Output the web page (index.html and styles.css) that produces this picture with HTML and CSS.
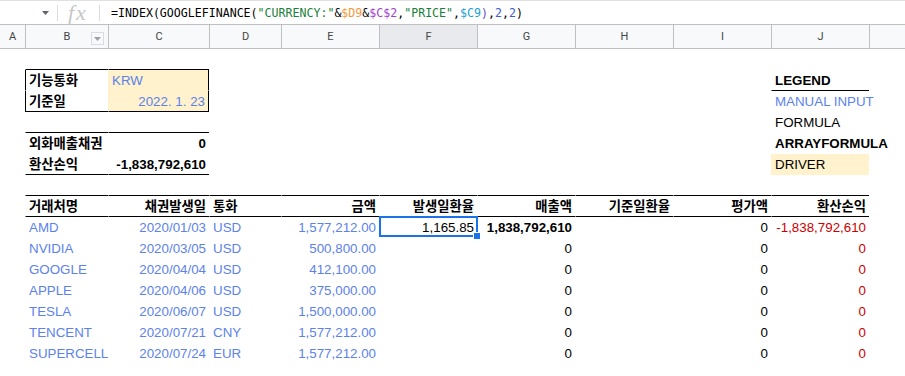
FILE: index.html
```html
<!DOCTYPE html>
<html lang="ko">
<head>
  <meta charset="UTF-8" />
  <title>외화환산</title>
  <link rel="stylesheet" href="styles.css">
</head>
<body>

  <div class="formula-bar">
    <div class="name-box">
      <svg class="caret" width="7" height="4" viewBox="0 0 7 4"><path d="M0 0h7L3.5 4z" fill="#5f6368"/></svg>
    </div>
    <div class="sep"></div>
    <div class="fx">fx</div>
    <div class="sep"></div>
    <div class="formula">=INDEX(GOOGLEFINANCE(<span class="f-str">"CURRENCY:"</span>&amp;<span class="f-d">$D9</span>&amp;<span class="f-c">$C$2</span>,<span class="f-str">"PRICE"</span>,<span class="f-c9">$C9</span><span class="f-p">)</span>,<span class="f-num">2</span>,<span class="f-num">2</span>)</div>
  </div>

  <div class="colhead">
    <div class="ch">A</div>
    <div class="ch ch-filter">B
      <span class="filter"><svg width="7" height="4" viewBox="0 0 7 4"><path d="M0 0h7L3.5 4z" fill="#9aa0a6"/></svg></span>
    </div>
    <div class="ch">C</div>
    <div class="ch">D</div>
    <div class="ch">E</div>
    <div class="ch active">F</div>
    <div class="ch">G</div>
    <div class="ch">H</div>
    <div class="ch">I</div>
    <div class="ch">J</div>
    <div class="ch"></div>
  </div>

  <div class="sheet">
    <!-- 1 -->
    <div class="row">
      <div class="cell"></div><div class="cell bb"></div><div class="cell bb"></div>
      <div class="cell"></div><div class="cell"></div><div class="cell"></div><div class="cell"></div>
      <div class="cell"></div><div class="cell"></div><div class="cell"></div><div class="cell"></div>
    </div>
    <!-- 2 -->
    <div class="row">
      <div class="cell"></div>
      <div class="cell bl b">기능통화</div>
      <div class="cell br drv in">KRW</div>
      <div class="cell"></div><div class="cell"></div><div class="cell"></div><div class="cell"></div>
      <div class="cell"></div><div class="cell"></div>
      <div class="cell bb b">LEGEND</div>
      <div class="cell"></div>
    </div>
    <!-- 3 -->
    <div class="row">
      <div class="cell"></div>
      <div class="cell bl bb b">기준일</div>
      <div class="cell br bb drv in r">2022. 1. 23</div>
      <div class="cell"></div><div class="cell"></div><div class="cell"></div><div class="cell"></div>
      <div class="cell"></div><div class="cell"></div>
      <div class="cell in">MANUAL INPUT</div>
      <div class="cell"></div>
    </div>
    <!-- 4 -->
    <div class="row">
      <div class="cell"></div><div class="cell bb"></div><div class="cell bb"></div>
      <div class="cell"></div><div class="cell"></div><div class="cell"></div><div class="cell"></div>
      <div class="cell"></div><div class="cell"></div>
      <div class="cell">FORMULA</div>
      <div class="cell"></div>
    </div>
    <!-- 5 -->
    <div class="row">
      <div class="cell"></div>
      <div class="cell b">외화매출채권</div>
      <div class="cell b r">0</div>
      <div class="cell"></div><div class="cell"></div><div class="cell"></div><div class="cell"></div>
      <div class="cell"></div><div class="cell"></div>
      <div class="cell b">ARRAYFORMULA</div>
      <div class="cell"></div>
    </div>
    <!-- 6 -->
    <div class="row">
      <div class="cell"></div>
      <div class="cell bb b">환산손익</div>
      <div class="cell bb b r">-1,838,792,610</div>
      <div class="cell"></div><div class="cell"></div><div class="cell"></div><div class="cell"></div>
      <div class="cell"></div><div class="cell"></div>
      <div class="cell drv">DRIVER</div>
      <div class="cell"></div>
    </div>
    <!-- 7 -->
    <div class="row">
      <div class="cell"></div>
      <div class="cell bb"></div><div class="cell bb"></div><div class="cell bb"></div><div class="cell bb"></div>
      <div class="cell bb"></div><div class="cell bb"></div><div class="cell bb"></div><div class="cell bb"></div>
      <div class="cell bb"></div>
      <div class="cell"></div>
    </div>
    <!-- 8 -->
    <div class="row">
      <div class="cell"></div>
      <div class="cell bb b">거래처명</div>
      <div class="cell bb b r">채권발생일</div>
      <div class="cell bb b">통화</div>
      <div class="cell bb b r">금액</div>
      <div class="cell bb b r">발생일환율</div>
      <div class="cell bb b r">매출액</div>
      <div class="cell bb b r">기준일환율</div>
      <div class="cell bb b r">평가액</div>
      <div class="cell bb b r">환산손익</div>
      <div class="cell"></div>
    </div>
    <!-- 9 -->
    <div class="row">
      <div class="cell"></div>
      <div class="cell in">AMD</div>
      <div class="cell in r">2020/01/03</div>
      <div class="cell in">USD</div>
      <div class="cell in r">1,577,212.00</div>
      <div class="cell r selected">1,165.85<span class="sel"><span class="handle"></span></span></div>
      <div class="cell b r">1,838,792,610</div>
      <div class="cell"></div>
      <div class="cell r">0</div>
      <div class="cell neg r">-1,838,792,610</div>
      <div class="cell"></div>
    </div>
    <!-- 10 -->
    <div class="row">
      <div class="cell"></div>
      <div class="cell in">NVIDIA</div>
      <div class="cell in r">2020/03/05</div>
      <div class="cell in">USD</div>
      <div class="cell in r">500,800.00</div>
      <div class="cell"></div>
      <div class="cell r">0</div>
      <div class="cell"></div>
      <div class="cell r">0</div>
      <div class="cell neg r">0</div>
      <div class="cell"></div>
    </div>
    <!-- 11 -->
    <div class="row">
      <div class="cell"></div>
      <div class="cell in">GOOGLE</div>
      <div class="cell in r">2020/04/04</div>
      <div class="cell in">USD</div>
      <div class="cell in r">412,100.00</div>
      <div class="cell"></div>
      <div class="cell r">0</div>
      <div class="cell"></div>
      <div class="cell r">0</div>
      <div class="cell neg r">0</div>
      <div class="cell"></div>
    </div>
    <!-- 12 -->
    <div class="row">
      <div class="cell"></div>
      <div class="cell in">APPLE</div>
      <div class="cell in r">2020/04/06</div>
      <div class="cell in">USD</div>
      <div class="cell in r">375,000.00</div>
      <div class="cell"></div>
      <div class="cell r">0</div>
      <div class="cell"></div>
      <div class="cell r">0</div>
      <div class="cell neg r">0</div>
      <div class="cell"></div>
    </div>
    <!-- 13 -->
    <div class="row">
      <div class="cell"></div>
      <div class="cell in">TESLA</div>
      <div class="cell in r">2020/06/07</div>
      <div class="cell in">USD</div>
      <div class="cell in r">1,500,000.00</div>
      <div class="cell"></div>
      <div class="cell r">0</div>
      <div class="cell"></div>
      <div class="cell r">0</div>
      <div class="cell neg r">0</div>
      <div class="cell"></div>
    </div>
    <!-- 14 -->
    <div class="row">
      <div class="cell"></div>
      <div class="cell in">TENCENT</div>
      <div class="cell in r">2020/07/21</div>
      <div class="cell in">CNY</div>
      <div class="cell in r">1,577,212.00</div>
      <div class="cell"></div>
      <div class="cell r">0</div>
      <div class="cell"></div>
      <div class="cell r">0</div>
      <div class="cell neg r">0</div>
      <div class="cell"></div>
    </div>
    <!-- 15 -->
    <div class="row">
      <div class="cell"></div>
      <div class="cell in">SUPERCELL</div>
      <div class="cell in r">2020/07/24</div>
      <div class="cell in">EUR</div>
      <div class="cell in r">1,577,212.00</div>
      <div class="cell"></div>
      <div class="cell r">0</div>
      <div class="cell"></div>
      <div class="cell r">0</div>
      <div class="cell neg r">0</div>
      <div class="cell"></div>
    </div>
  </div>

</body>
</html>
```

FILE: styles.css
```css
body {
  margin: 0;
  background: #fff;
  font-family: "Liberation Sans", Arial, "Noto Sans CJK KR", sans-serif;
  width: 905px;
  height: 376px;
  overflow: hidden;
}

/* formula bar */
.formula-bar {
  display: flex;
  align-items: center;
  height: 24px;
  border-top: 1px solid #e0e0e0;
  box-sizing: border-box;
}

.name-box {
  width: 57px;
  display: flex;
  justify-content: flex-end;
  padding-right: 8px;
  box-sizing: border-box;
}

.sep {
  width: 1px;
  height: 16px;
  background: #dadce0;
}

.fx {
  width: 41px;
  padding-left: 10px;
  box-sizing: border-box;
  font-family: "Liberation Serif", serif;
  font-style: italic;
  font-size: 22px;
  line-height: 20px;
  color: #c4c7c5;
  letter-spacing: 2px;
}

.formula {
  padding-left: 11px;
  font-family: "DejaVu Sans Mono", "Liberation Mono", monospace;
  font-size: 11.6px;
  color: #000;
  white-space: nowrap;
}
.f-str { color: #188038; }
.f-d { color: #f29b3c; }
.f-c { color: #a142c9; }
.f-c9 { color: #1aa1d6; }
.f-p { color: #6a4ad0; }
.f-num { color: #3c5ad6; }

/* column headers */
.colhead,
.row {
  display: grid;
  grid-template-columns: 25px 83px 101px 72px 98px 98px 98px 98px 98px 98px 1fr;
}

.colhead {
  height: 25px;
  border-top: 1px solid #c0c0c0;
  border-bottom: 1px solid #c0c0c0;
  box-sizing: border-box;
  background: #f8f9fa;
}

.ch {
  position: relative;
  border-left: 1px solid #c0c0c0;
  text-align: center;
  font-family: Roboto, "Liberation Sans", sans-serif;
  font-size: 11px;
  line-height: 23px;
  color: #444;
}
.ch:first-child {
  border-left: none;
}
.ch.active {
  background: #e8eaed;
}

.filter {
  position: absolute;
  left: 65px;
  top: 7px;
  width: 11px;
  height: 11px;
  border: 1px solid #dadce0;
  background: #f8f9fa;
  display: flex;
  align-items: center;
  justify-content: center;
}

/* cells */
.row {
  height: 21px;
}

.cell {
  height: 21px;
  box-sizing: border-box;
  padding: 1px 3px 0;
  border-left: 1px solid transparent;
  border-bottom: 1px solid transparent;
  font-size: 13.33px;
  line-height: 20px;
  color: #000;
  white-space: nowrap;
  min-width: 0;
}

.r { text-align: right; }
.b { font-weight: bold; }
.in { color: #5c82ea; }
.neg { color: #cc0000; }
.drv { background: #fff2cc; }

.bb { border-bottom-color: #000; }
.bl { border-left-color: #000; }
.br { border-right: 1px solid #000; }

.selected {
  position: relative;
}

.sel {
  position: absolute;
  left: -1px;
  top: -1px;
  right: -1px;
  bottom: 0;
  border: 2px solid #1a73e8;
}

.handle {
  position: absolute;
  right: -5px;
  bottom: -5px;
  width: 6px;
  height: 6px;
  background: #1a73e8;
  border: 1px solid #fff;
}
```
